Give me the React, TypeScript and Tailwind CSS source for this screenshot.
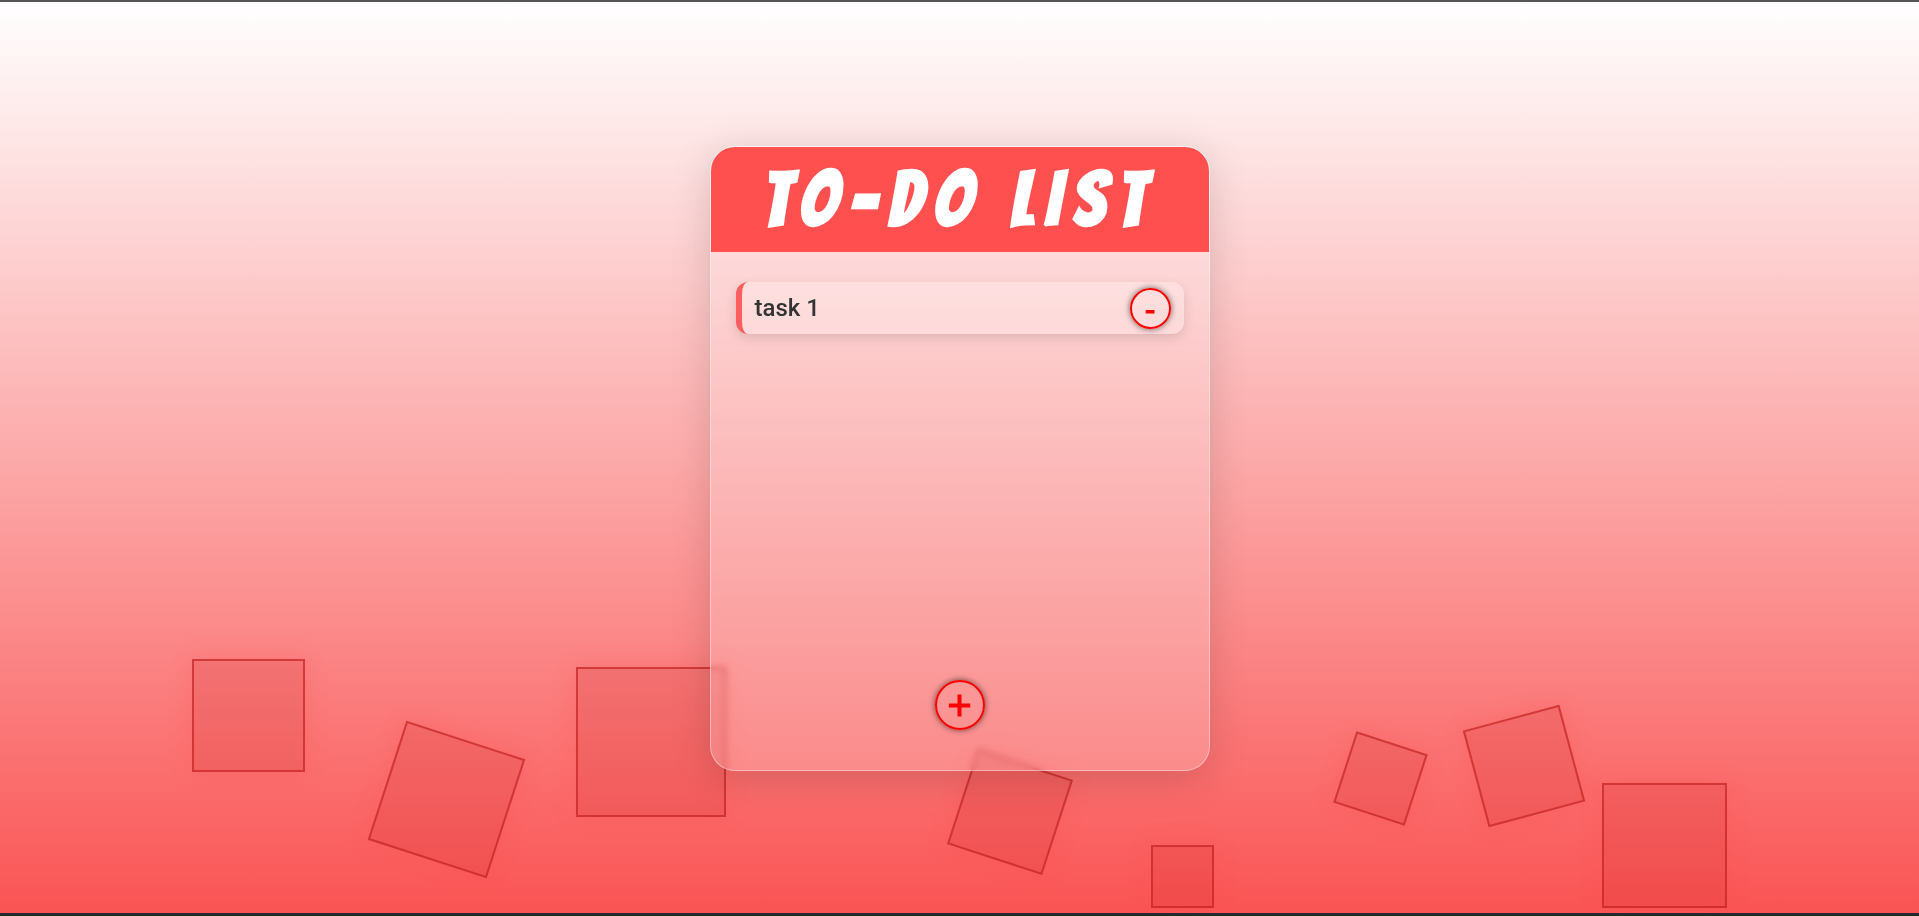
import { useState } from "react";

const squares = [
  "left-[10%] bottom-[141px] size-[113px]",
  "left-[20%] bottom-[51px] size-[125px] rotate-18",
  "left-[30%] bottom-[96px] size-[150px]",
  "left-[50%] bottom-[51px] size-[100px] rotate-18",
  "left-[60%] bottom-[5px] size-[63px]",
  "left-[70%] bottom-[97px] size-[75px] rotate-18",
  "left-[76.8%] bottom-[97px] size-[100px] -rotate-15",
  "left-[83.5%] bottom-[5px] size-[125px]",
];

const roundButton =
  "flex items-center justify-center rounded-full border-2 border-[#ff0000] pt-0.5 text-[#ff0000] [-webkit-text-stroke:1px_#ff0000] shadow-[0_0_6px_rgba(0,0,0,0.6)] font-['Liberation_Sans',sans-serif] leading-none";

export default function App() {
  const [tasks, setTasks] = useState(["task 1"]);

  return (
    <main className="relative flex min-h-screen items-center justify-center overflow-hidden border-t-2 border-b-3 border-t-[#555555] border-b-[#25282c] bg-linear-to-b/srgb from-white to-[#fa5454] pt-[34px] pb-8 font-['Roboto',sans-serif]">
      <div aria-hidden="true">
        {squares.map((place) => (
          <div
            key={place}
            className={`absolute border-2 border-[#c32323]/70 bg-[#c81616]/15 shadow-[0_0_20px_rgba(255,80,80,0.3)] ${place}`}
          />
        ))}
      </div>

      <section className="relative flex min-h-[625px] w-full max-w-[500px] flex-col overflow-hidden rounded-[25px] border border-white/40 bg-white/20 shadow-[0_8px_40px_rgba(0,0,0,0.15)] backdrop-blur-[3px]">
        <h1 className="flex h-[105px] items-center justify-center bg-[#ff4848]/95 font-['Bangers',fantasy] text-[76px] leading-none font-bold tracking-[12px] text-white">
          TO-DO LIST
        </h1>
        <ul className="flex flex-1 flex-col gap-4 px-[25px] pt-[30px]">
          {tasks.map((task, index) => (
            <li
              key={index}
              className="flex h-[52px] items-center justify-between rounded-xl border-l-6 border-[#ff5e5e] bg-white/25 px-[13px] text-2xl font-medium text-[#333333] shadow-[0_4px_12px_rgba(0,0,0,0.12)]"
            >
              <span>{task}</span>
              <button
                type="button"
                aria-label={`Remove ${task}`}
                onClick={() => setTasks(tasks.filter((_, i) => i !== index))}
                className={`${roundButton} size-[41px] text-[32px] font-normal`}
              >
                -
              </button>
            </li>
          ))}
        </ul>
        <div className="flex justify-center pb-[40px]">
          <button
            type="button"
            aria-label="Add task"
            onClick={() => setTasks([...tasks, `task ${tasks.length + 1}`])}
            className={`${roundButton} size-[50px] text-[42px] font-normal`}
          >
            +
          </button>
        </div>
      </section>
    </main>
  );
}
